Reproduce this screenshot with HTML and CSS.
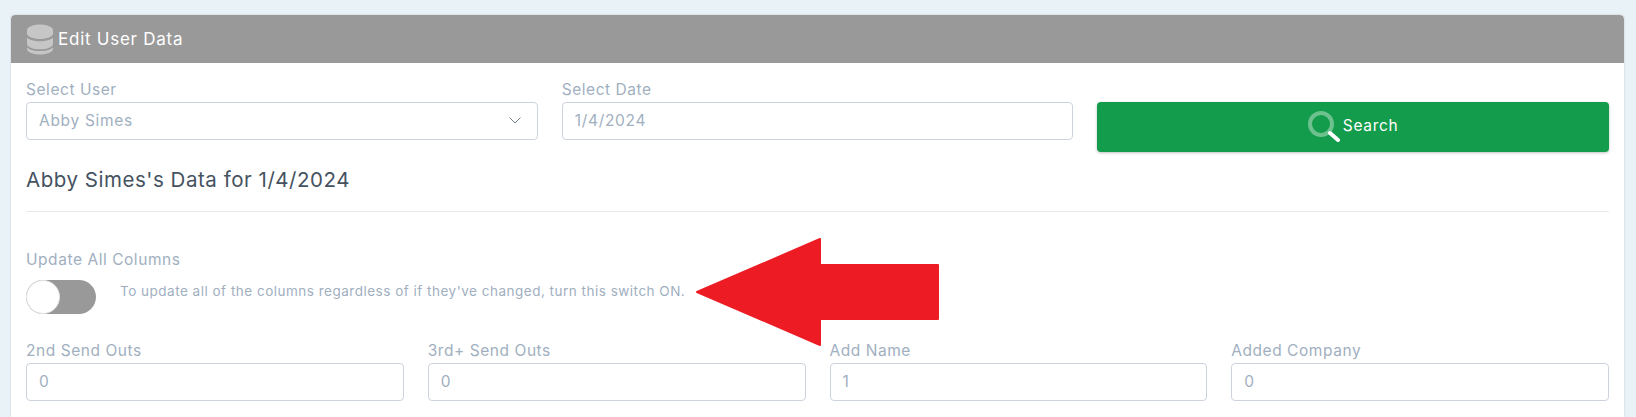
FILE: index.html
```html
<!DOCTYPE html>
<html lang="en">
<head>
    <meta charset="UTF-8">
    <title>Edit User Data</title>
    <link rel="stylesheet" href="styles.css">
</head>
<body>
    <div class="card">
        <div class="card-header">
            <svg class="db-icon" width="28" height="31" viewBox="0 0 28 31">
                <path fill="#c6c6c6" d="M1 6C1 3 7 .5 14 .5S27 3 27 6v3.500c0 3-6 5.500-13 5.500S1 12.500 1 9.500z"/>
                <path fill="#c6c6c6" d="M1 13.500c2.500 2.500 7.500 3.800 13 3.800s10.500-1.300 13-3.800v6.500c0 3-6 5.300-13 5.300S1 23 1 20z"/>
                <path fill="#c6c6c6" d="M1 23.500c2.500 2.500 7.500 3.600 13 3.600s10.500-1.100 13-3.600V25c0 3-6 5.500-13 5.500S1 28 1 25z"/>
            </svg>
            <span class="card-title">Edit User Data</span>
        </div>
        <div class="card-body">
            <div class="row-3">
                <div class="field">
                    <label>Select User</label>
                    <div class="control select-control">
                        <span>Abby Simes</span>
                        <svg width="12" height="7" viewBox="0 0 12 7"><path d="M.5.5 6 6l5.500-5.500" fill="none" stroke="#76838f" stroke-width="1"/></svg>
                    </div>
                </div>
                <div class="field">
                    <label>Select Date</label>
                    <div class="control">1/4/2024</div>
                </div>
                <div class="field search-field">
                    <button class="btn-search">
                        <svg width="33" height="31" viewBox="0 0 33 31">
                            <circle cx="13" cy="13" r="11" fill="none" stroke="#fff" stroke-opacity=".38" stroke-width="4"/>
                            <path d="M22 22l8 7" stroke="#fff" stroke-width="4" stroke-linecap="round"/>
                        </svg>
                        <span class="btn-text">Search</span>
                    </button>
                </div>
            </div>

            <h4 class="data-title">Abby Simes's Data for 1/4/2024</h4>
            <hr>

            <label class="toggle-label">Update All Columns</label>
            <div class="toggle-row">
                <div class="toggle"><div class="knob"></div></div>
                <p class="help">To update all of the columns regardless of if they've changed, turn this switch ON.</p>
            </div>

            <div class="row-4">
                <div class="field">
                    <label>2nd Send Outs</label>
                    <div class="control">0</div>
                </div>
                <div class="field">
                    <label>3rd+ Send Outs</label>
                    <div class="control">0</div>
                </div>
                <div class="field">
                    <label>Add Name</label>
                    <div class="control">1</div>
                </div>
                <div class="field">
                    <label>Added Company</label>
                    <div class="control">0</div>
                </div>
            </div>
        </div>
    </div>

    <svg class="arrow" width="244" height="108" viewBox="0 0 244 108">
        <path fill="#ed1c24" stroke="#ed1c24" stroke-width="2" stroke-linejoin="round" d="M1 54 124 1v26h118v54H124v26z"/>
    </svg>
</body>
</html>
```

FILE: styles.css
```css
* {
    margin: 0;
    padding: 0;
    box-sizing: border-box;
}
html, body {
    height: 100%;
    overflow: hidden;
}
body {
    position: relative;
    font-family: Inter, "Open Sans", sans-serif;
    background-color: #e9f2f6;
    padding: 15px 12px 0 11px;
    color: #a1afbf;
}
.card {
    background: white;
    border-radius: 4px 4px 0 0;
    box-shadow: 0 0 2px rgba(0, 0, 0, 0.2);
    height: 402px;
    overflow: hidden;
}
.card-header {
    display: flex;
    align-items: center;
    height: 48px;
    padding-left: 15px;
    background: #999999;
    border-radius: 4px 4px 0 0;
    color: white;
}
.db-icon {
    margin-right: 4px;
}
.card-title {
    font-size: 17px;
    letter-spacing: 0.75px;
}
.card-body {
    padding: 14.500px 15px 0;
}
.row-3 {
    display: grid;
    grid-template-columns: repeat(3, 1fr);
    column-gap: 24px;
}
.row-4 {
    display: grid;
    grid-template-columns: repeat(4, 1fr);
    column-gap: 24px;
    margin-top: 25px;
}
label {
    display: block;
    height: 24px;
    line-height: 24px;
    font-size: 15.500px;
    letter-spacing: 0.55px;
}
.control {
    height: 38px;
    line-height: 36px;
    padding: 0 12px;
    border: 1px solid #cdd3de;
    border-radius: 4px;
    font-size: 15.500px;
    letter-spacing: 0.7px;
}
.select-control {
    display: flex;
    align-items: center;
    justify-content: space-between;
    padding-right: 16px;
}
.search-field {
    padding-top: 24px;
}
.btn-search {
    display: flex;
    align-items: center;
    justify-content: center;
    gap: 2px;
    width: 100%;
    height: 50px;
    border: none;
    border-radius: 4px;
    background: #139c4b;
    box-shadow: 0 1px 3px rgba(0, 0, 0, 0.25);
    color: white;
    font-family: inherit;
    font-size: 15.500px;
    letter-spacing: 0.7px;
}
.btn-text {
    padding-bottom: 3px;
}
.data-title {
    margin-top: 13px;
    height: 30px;
    line-height: 30px;
    font-size: 20.500px;
    font-weight: 400;
    letter-spacing: 0.53px;
    color: #45525f;
}
hr {
    margin-top: 16px;
    border: none;
    border-top: 1px solid #e6e8ec;
}
.toggle-label {
    margin-top: 36px;
}
.toggle-row {
    display: flex;
    align-items: flex-start;
    margin-top: 8px;
}
.toggle {
    width: 70px;
    height: 34px;
    border-radius: 17px;
    background: #999999;
}
.knob {
    width: 34px;
    height: 34px;
    border-radius: 50%;
    background: white;
    border: 1px solid #e4e4e4;
}
.help {
    margin-left: 24px;
    line-height: 22px;
    font-size: 13.500px;
    letter-spacing: 0.5px;
}
.arrow {
    position: absolute;
    left: 696px;
    top: 238px;
}
```
